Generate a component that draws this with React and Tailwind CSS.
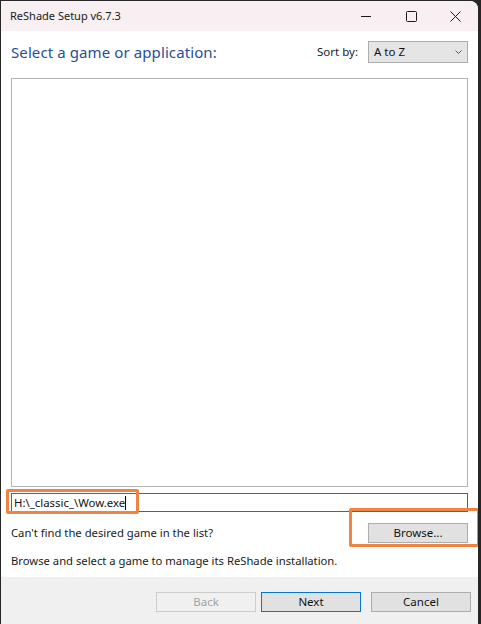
import React from "react";

const font = { fontFamily: '"Noto Sans", "Open Sans", Arial, sans-serif' };

function Btn({ children, variant = "normal" }) {
  const cls =
    variant === "primary"
      ? "border-[#0078d7] bg-[#e1e1e1] text-[#111]"
      : variant === "disabled"
      ? "border-[#cccccc] bg-[#f0f0f0] text-[#a3a3a3]"
      : "border-[#adadad] bg-[#e1e1e1] text-[#111]";
  return (
    <div className={`w-[100px] h-[20px] border flex items-center justify-center text-[11.5px] leading-none ${cls}`}>
      {children}
    </div>
  );
}

export default function App() {
  return (
    <div className="w-[481px] h-[624px] bg-[#262626] overflow-hidden" style={font}>
      <div className="relative ml-[1px] mt-[1px] w-[477px] h-[623px] rounded-tr-[8px] overflow-hidden bg-white flex flex-col">
        {/* Title bar */}
        <div className="h-[30px] bg-[#f7eff1] flex items-center shrink-0">
          <span className="ml-[9px] text-[11px] text-[#1a1a1a]">ReShade Setup v6.7.3</span>
          <div className="ml-auto flex items-center h-full">
            <div className="w-[46px] h-full flex items-center justify-center mr-[-1px]">
              <svg width="10" height="10" viewBox="0 0 10 10">
                <line x1="0" y1="5.5" x2="10" y2="5.5" stroke="#1a1a1a" strokeWidth="1" />
              </svg>
            </div>
            <div className="w-[46px] h-full flex items-center justify-center">
              <svg width="11" height="11" viewBox="0 0 11 11">
                <rect x="0.5" y="0.5" width="10" height="10" rx="1" fill="none" stroke="#1a1a1a" strokeWidth="1" />
              </svg>
            </div>
            <div className="w-[46px] h-full flex items-center justify-center ml-[-2px]">
              <svg width="11" height="11" viewBox="0 0 11 11">
                <path d="M0.5 0.5 L10.5 10.5 M10.5 0.5 L0.5 10.5" stroke="#1a1a1a" strokeWidth="1" />
              </svg>
            </div>
          </div>
        </div>

        {/* Content */}
        <div className="flex-1 flex flex-col px-[10px] pt-[10px]">
          <div className="flex items-center h-[22px]">
            <span className="text-[15px] text-[#1f4f9b] tracking-[0.1px]">Select a game or application:</span>
            <span className="ml-auto text-[11.5px] text-[#1a1a1a] mr-[10px]">Sort by:</span>
            <div className="w-[100px] h-[22px] border border-[#adadad] bg-[#e5e5e5] flex items-center pl-[5px] pr-[5px] text-[11.5px] text-[#111]">
              <span>A to Z</span>
              <svg className="ml-auto" width="7" height="4" viewBox="0 0 7 4">
                <path d="M0.5 0.5 L3.5 3.5 L6.5 0.5" fill="none" stroke="#555" strokeWidth="1" />
              </svg>
            </div>
          </div>
          <div className="mt-[15px] h-[409px] border border-[#b5b5b5] bg-white" />
          <div className="mt-[6px] h-[19px] border border-[#0078d7] flex items-center pl-[2px] text-[11.4px] text-[#111]">
            <span>H:\_classic_\Wow.exe</span>
            <span className="w-px h-[14px] bg-black" />
          </div>
          <div className="mt-[11px] flex items-center h-[20px]">
            <span className="text-[11.25px] text-[#1a1a1a]">Can't find the desired game in the list?</span>
            <div className="ml-auto">
              <Btn>Browse...</Btn>
            </div>
          </div>
          <div className="mt-[10px] text-[11.25px] text-[#1a1a1a] leading-[16px]">
            Browse and select a game to manage its ReShade installation.
          </div>
        </div>

        {/* Footer */}
        <div className="h-[47px] bg-[#f0f0f0] shrink-0 flex items-start justify-end pt-[15px] pr-[7px]">
          <div className="flex gap-[5px]">
            <Btn variant="disabled">Back</Btn>
            <Btn variant="primary">Next</Btn>
            <div className="ml-[5px]">
              <Btn>Cancel</Btn>
            </div>
          </div>
        </div>

        {/* Orange annotation boxes */}
        <div className="absolute left-[5px] top-[488px] w-[133px] h-[25px] border-[3px] border-[#ee8444] rounded-[2px]" />
        <div className="absolute left-[348px] top-[507px] w-[131px] h-[39px] border-[3px] border-[#ee8444] rounded-[2px]" />
      </div>
    </div>
  );
}
